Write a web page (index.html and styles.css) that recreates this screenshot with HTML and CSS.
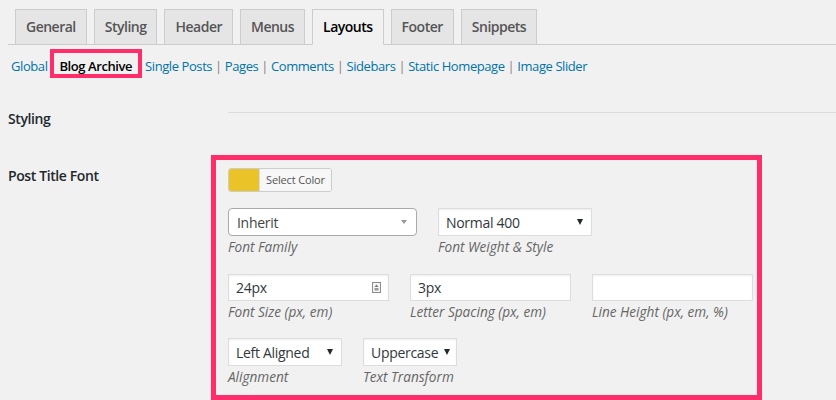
FILE: index.html
```html
<!DOCTYPE html>
<html>
<head>
<meta charset="utf-8">
<link rel="stylesheet" href="styles.css">
</head>
<body>
<div class="wrap">
  <nav class="tabs">
    <a class="tab">General</a>
    <a class="tab">Styling</a>
    <a class="tab">Header</a>
    <a class="tab">Menus</a>
    <a class="tab active">Layouts</a>
    <a class="tab">Footer</a>
    <a class="tab">Snippets</a>
  </nav>
  <div class="subnav">
    <a class="link">Global</a> <span class="current">Blog Archive</span> <a class="link">Single Posts</a> <span class="sep">|</span> <a class="link">Pages</a> <span class="sep">|</span> <a class="link">Comments</a> <span class="sep">|</span> <a class="link">Sidebars</a> <span class="sep">|</span> <a class="link">Static Homepage</a> <span class="sep">|</span> <a class="link">Image Slider</a>
  </div>
  <div class="form">
    <div class="row section">
      <div class="th">Styling</div>
      <div class="td"><div class="rule"></div></div>
    </div>
    <div class="row">
      <div class="th th-field">Post Title Font</div>
      <div class="td">
        <div class="highlight">
          <div class="color-btn"><span class="swatch"></span><span class="color-label">Select Color</span></div>
          <div class="fields">
            <div class="field w-family">
              <div class="select rounded"><span>Inherit</span><span class="caret gray"></span></div>
              <div class="label">Font Family</div>
            </div>
            <div class="field w-weight">
              <div class="select"><span>Normal 400</span><span class="caret"></span></div>
              <div class="label">Font Weight &amp; Style</div>
            </div>
          </div>
          <div class="fields">
            <div class="field w-input">
              <div class="input"><span>24px</span>
                <svg class="spin" width="9" height="11" viewBox="0 0 9 11"><rect x="0.5" y="0.5" width="8" height="10" fill="#f4f4f4" stroke="#8c8c8c"/><path d="M4.5 2.5 L6.5 5 L2.5 5 Z" fill="#777"/><rect x="2.5" y="6" width="4" height="2.5" fill="#999"/></svg>
              </div>
              <div class="label">Font Size (px, em)</div>
            </div>
            <div class="field w-input">
              <div class="input"><span>3px</span></div>
              <div class="label">Letter Spacing (px, em)</div>
            </div>
            <div class="field w-input">
              <div class="input"></div>
              <div class="label">Line Height (px, em, %)</div>
            </div>
          </div>
          <div class="fields last">
            <div class="field w-align">
              <div class="select"><span>Left Aligned</span><span class="caret"></span></div>
              <div class="label">Alignment</div>
            </div>
            <div class="field w-transform">
              <div class="select"><span>Uppercase</span><span class="caret"></span></div>
              <div class="label">Text Transform</div>
            </div>
          </div>
        </div>
      </div>
    </div>
  </div>
</div>
</body>
</html>
```
FILE: styles.css
```css
* { box-sizing: border-box; }
html, body { margin: 0; padding: 0; }
body {
  background: #f1f1f1;
  font-family: "Open Sans", "Noto Sans", sans-serif;
  color: #23282d;
  width: 836px;
  height: 400px;
  overflow: hidden;
}
.wrap { padding-left: 8px; }

.tabs {
  display: flex;
  align-items: flex-end;
  padding-top: 9px;
  border-bottom: 1px solid #ccc;
  height: 45px;
}
.tab {
  margin-left: 7px;
  margin-bottom: -1px;
  padding: 5px 10px;
  font-size: 14px;
  font-weight: 600;
  letter-spacing: -0.5px;
  line-height: 24px;
  color: #555;
  background: #e5e5e5;
  border: 1px solid #ccc;
}
.tab.active {
  background: #f1f1f1;
  color: #000;
  border-bottom-color: #f1f1f1;
}

.subnav {
  padding: 4px 0 0 3px;
  font-size: 13px;
  letter-spacing: -0.42px;
  line-height: 35px;
  height: 39px;
  white-space: nowrap;
}
.link { color: #0073aa; }
.sep { color: #8d7d7d; }
.current {
  display: inline-block;
  vertical-align: top;
  height: 29px;
  border: 4px solid #ff2d6a;
  padding: 5px 6px 0 5px;
  line-height: 16px;
  font-weight: 600;
  color: #000;
}

.form { padding-top: 16px; }
.row { display: flex; }
.th {
  width: 220px;
  flex: none;
  font-size: 14px;
  font-weight: 600;
  letter-spacing: -0.4px;
  line-height: 20px;
  padding-top: 9px;
  color: #23282d;
}
.th-field { padding-top: 11px; }
.td { flex: 1; }
.section { height: 55px; }
.rule { margin-top: 12px; border-top: 1px solid #ddd; }

.highlight {
  margin-left: -17px;
  width: 551px;
  border: 5px solid #ff2d6a;
  padding: 8px 4px 9px 12px;
}
.color-btn {
  display: flex;
  width: fit-content;
  height: 24px;
  border: 1px solid #ccc;
  border-radius: 3px;
  background: #f7f7f7;
  overflow: hidden;
}
.swatch { width: 30px; background: #e9c327; }
.color-label {
  padding: 0 6px 0 6px;
  background: #f7f7f7;
  font-size: 11px;
  letter-spacing: -0.15px;
  line-height: 22px;
  color: #555;
  border-left: 1px solid #ddd;
}

.fields { display: flex; gap: 21px; margin-top: 16px; }
.fields + .fields { margin-top: 18px; }
.fields.last { margin-top: 17px; }
.field { flex: none; }
.w-family { width: 189px; }
.w-weight { width: 154px; }
.w-input { width: 161px; }
.w-align { width: 114px; }
.w-transform { width: 94px; }

.select, .input {
  height: 28px;
  display: flex;
  align-items: center;
  justify-content: space-between;
  gap: 6px;
  background: #fff;
  border: 1px solid #ddd;
  font-size: 14px;
  letter-spacing: -0.3px;
  color: #32373c;
  padding: 0 8px 0 7px;
  white-space: nowrap;
  box-shadow: inset 0 1px 2px rgba(0,0,0,.07);
}
.input { height: 27px; padding: 0 7px 0 7px; }
.select.rounded {
  border-color: #aaa;
  border-radius: 4px;
  box-shadow: none;
  color: #444;
  padding: 0 9px 0 8px;
}
.caret {
  flex: none;
  width: 0;
  height: 0;
  border-left: 3px solid transparent;
  border-right: 3px solid transparent;
  border-top: 6px solid #23282d;
}
.caret.gray {
  border-left-width: 3px;
  border-right-width: 3px;
  border-top: 4px solid #999;
}
.spin { display: block; flex: none; }
.label {
  margin-top: 2px;
  font-size: 13.6px;
  font-style: italic;
  line-height: 18px;
  color: #666;
  white-space: nowrap;
}
```
